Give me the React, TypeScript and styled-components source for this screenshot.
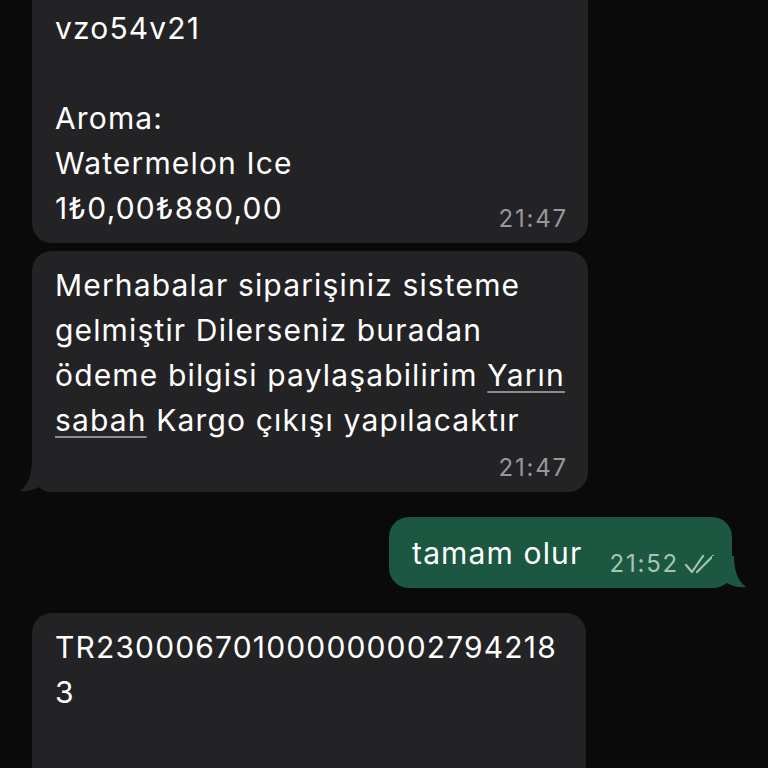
import React from "react";
import styled, { createGlobalStyle, css } from "styled-components";

const Global = createGlobalStyle`
  html, body { margin: 0; padding: 0; background: #0a0a0a; }
  body { font-family: Inter, "Liberation Sans", sans-serif; -webkit-font-smoothing: antialiased; }
`;

const Screen = styled.div`
  width: 768px;
  height: 768px;
  overflow: hidden;
  background: #0a0a0a;
  box-sizing: border-box;
  padding: 0 36px 0 32px;
  display: flex;
  flex-direction: column;
  gap: 25px;
`;

const Group = styled.div<{ $out?: boolean }>`
  display: flex;
  flex-direction: column;
  gap: 8px;
  align-items: ${(p) => (p.$out ? "flex-end" : "flex-start")};
`;

const Bubble = styled.div<{ $out?: boolean; $clipTop?: boolean; $width?: number; $open?: boolean }>`
  position: relative;
  box-sizing: border-box;
  width: ${(p) => (p.$width ? `${p.$width}px` : "auto")};
  background: ${(p) => (p.$out ? "#1c5742" : "#232325")};
  color: #ffffff;
  border-radius: 20px;
  padding: ${(p) => (p.$out ? "14px 16px 12px 23px" : "12px 20px 12px 23px")};
  ${(p) =>
    p.$clipTop &&
    css`
      border-top-left-radius: 0;
      border-top-right-radius: 0;
      padding-top: 6px;
    `}
  ${(p) =>
    p.$open &&
    css`
      min-height: 240px;
    `}
`;

const Body = styled.div`
  font-size: 30px;
  line-height: 45px;
  white-space: pre-line;
  letter-spacing: 1.15px;
`;

const Link = styled.span`
  text-decoration: underline;
  text-decoration-color: #8d8d90;
  text-decoration-thickness: 1.5px;
  text-underline-offset: 5px;
`;

const Meta = styled.div<{ $out?: boolean; $offset?: number }>`
  display: flex;
  justify-content: flex-end;
  align-items: center;
  gap: 5px;
  font-size: 24px;
  line-height: 24px;
  letter-spacing: 1.8px;
  color: ${(p) => (p.$out ? "#a4c4b6" : "#98989c")};
  margin-top: ${(p) => p.$offset ?? 0}px;
`;

const Row = styled.div`
  display: flex;
  align-items: flex-end;
  gap: 27px;
`;

const TailSvg = styled.svg<{ $out?: boolean }>`
  position: absolute;
  bottom: 0;
  width: 36px;
  height: 32px;
  color: ${(p) => (p.$out ? "#1c5742" : "#232325")};
  ${(p) => (p.$out ? "right: -16px; transform: scaleX(-1);" : "left: -14px;")}
`;

const Tail = ({ out }: { out?: boolean }) => (
  <TailSvg $out={out} viewBox="0 0 36 32">
    <path
      d="M14 0 C14 15 10 25 2 31 C9 32 16 30 21 27 C25 30 30 32 36 32 L36 0 Z"
      fill="currentColor"
    />
  </TailSvg>
);

const Ticks = () => (
  <svg width="32" height="20" viewBox="0 0 32 20" fill="none" stroke="currentColor" strokeWidth="2.2" strokeLinecap="round" strokeLinejoin="round">
    <path d="M2 11 L8 18 L19 2" />
    <path d="M13 18 L29 2" />
  </svg>
);

export default function App() {
  return (
    <>
      <Global />
      <Screen>
        <Group>
          <Bubble $clipTop $width={556}>
            <Body>{"vzo54v21\n\nAroma:\nWatermelon Ice\n1₺0,00₺880,00"}</Body>
            <Meta $offset={-24}>21:47</Meta>
          </Bubble>
          <Bubble $width={556}>
            <Body>
              {"Merhabalar siparişiniz sisteme\ngelmiştir Dilerseniz buradan\nödeme bilgisi paylaşabilirim "}
              <Link>Yarın</Link>
              {"\n"}
              <Link>sabah</Link>
              {" Kargo çıkışı yapılacaktır"}
            </Body>
            <Meta $offset={13}>21:47</Meta>
            <Tail />
          </Bubble>
        </Group>
        <Group $out>
          <Bubble $out>
            <Row>
              <Body>tamam olur</Body>
              <Meta $out>
                21:52
                <Ticks />
              </Meta>
            </Row>
            <Tail out />
          </Bubble>
        </Group>
        <Group>
          <Bubble $width={554} $open>
            <Body>{"TR230006701000000002794218\n3"}</Body>
          </Bubble>
        </Group>
      </Screen>
    </>
  );
}
